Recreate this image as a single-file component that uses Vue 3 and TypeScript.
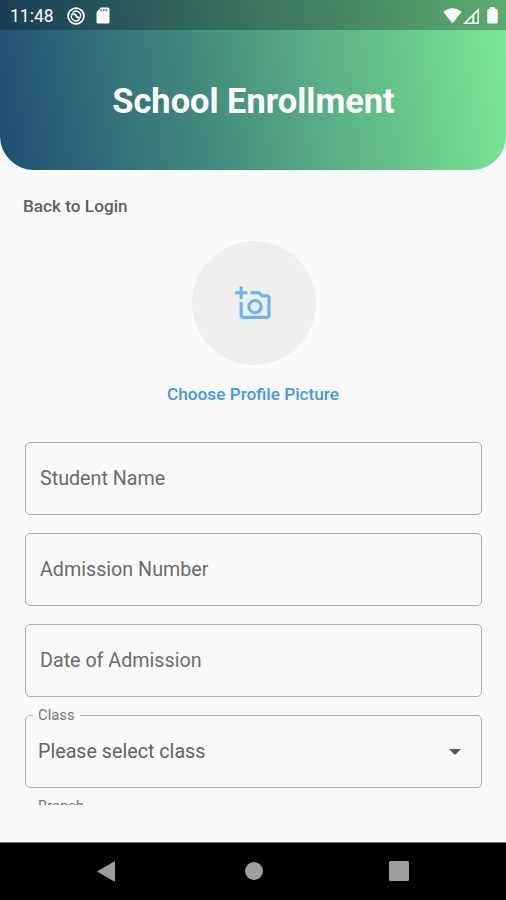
<script setup lang="ts">
interface TextField {
  id: string
  label: string
}

const fields: TextField[] = [
  { id: 'student', label: 'Student Name' },
  { id: 'admission', label: 'Admission Number' },
  { id: 'date', label: 'Date of Admission' },
]
</script>

<template>
  <div class="screen">
    <header class="header">
      <div class="status">
        <span class="clock">11:48</span>
        <svg class="sync" viewBox="0 0 18 18" width="18" height="18" fill="none" stroke="#fff">
          <circle cx="9" cy="9" r="7.9" stroke-width="1.7" />
          <path d="M5.5 5.6A4.7 4.7 0 0 1 13.6 9.6M12.6 12.2A4.7 4.7 0 0 1 4.4 8.4" stroke-width="1.4" />
          <path d="M4.2 7.8C7 6.2 8.4 7.4 9.3 9S11.400 11.400 13.8 10.200" stroke-width="1.8" />
        </svg>
        <svg class="card" viewBox="0 0 14 17" width="14" height="17">
          <path d="M5 .5H12Q13.5 .5 13.5 2V15Q13.5 16.5 12 16.5H2Q.5 16.5 .5 15V5Z" fill="#fff" />
          <path d="M5.3 2.300V4.300M7.900 2.300V4.300M10.500 2.300V4.300" stroke="#52736f" stroke-width="1.5" />
        </svg>
        <div class="system">
          <svg viewBox="0 0 19 16" width="19" height="16">
            <path d="M.3 3.7Q9.5-3 18.7 3.7L9.5 15.5Z" fill="#fff" />
          </svg>
          <svg class="signal" viewBox="0 0 17 16" width="17" height="16">
            <path d="M1.8 15.2L15.3 1.7V15.2Z" fill="none" stroke="#fff" stroke-width="1.5" />
            <path d="M10.300 6.500V15" fill="none" stroke="#fff" stroke-width="2" />
          </svg>
          <svg class="battery" viewBox="0 0 11 17" width="11" height="17">
            <path d="M3 .3H8V2H9.4Q10.7 2 10.7 3.3V15.3Q10.7 16.5 9.4 16.5H1.6Q.3 16.5 .3 15.3V3.3Q.3 2 1.6 2H3Z" fill="#fff" />
          </svg>
        </div>
      </div>
      <h1 class="title">School Enrollment</h1>
    </header>

    <main class="content">
      <a class="back">Back to Login</a>
      <div class="profile">
        <div class="avatar">
          <svg viewBox="0 0 24 24" width="37" height="37" fill="#64b5f6">
            <path d="M21 6h-3.17L16 4h-6v2h5.12l1.83 2H21v12H5v-9H3v9c0 1.1.9 2 2 2h16c1.1 0 2-.9 2-2V8c0-1.1-.9-2-2-2zM8 14c0 2.760 2.240 5 5 5s5-2.240 5-5-2.240-5-5-5-5 2.240-5 5zm5-3c1.650 0 3 1.350 3 3s-1.350 3-3 3-3-1.350-3-3 1.350-3 3-3zM5 6h3V4H5V1H3v3H0v2h3v3h2z" />
          </svg>
        </div>
        <a class="choose">Choose Profile Picture</a>
      </div>

      <form class="form">
        <div v-for="field in fields" :key="field.id" class="field">
          <span class="label">{{ field.label }}</span>
        </div>
        <div class="field select">
          <span class="legend">Class</span>
          <span class="value">Please select class</span>
          <svg viewBox="0 0 12 6" width="12" height="6"><path d="M0 0H12L6 6Z" fill="#555" /></svg>
        </div>
        <div class="field select">
          <span class="legend">Branch</span>
        </div>
      </form>
    </main>

    <nav class="navigation">
      <svg viewBox="0 0 18 21" width="18" height="21"><path d="M0 10.500L18 0V21Z" fill="#9e9e9e" /></svg>
      <svg class="home" viewBox="0 0 18 18" width="18" height="18"><circle cx="9" cy="9" r="9" fill="#9e9e9e" /></svg>
      <svg viewBox="0 0 20 20" width="20" height="20"><rect width="20" height="20" rx="1.5" fill="#9e9e9e" /></svg>
    </nav>
  </div>
</template>

<style>
body {
  margin: 0;
  background: #fafafa;
}
</style>

<style scoped>
.screen {
  width: 506px;
  height: 900px;
  display: flex;
  flex-direction: column;
  overflow: hidden;
  background: #fafafa;
  font-family: Roboto, sans-serif;
}
.header {
  height: 170px;
  flex: none;
  border-radius: 0 0 34px 34px;
  overflow: hidden;
  background: linear-gradient(82deg, #1f4e74, #4c9a80 50%, #7ce896);
}
.status {
  height: 30px;
  box-sizing: border-box;
  display: flex;
  align-items: center;
  padding: 1px 8px 0 10px;
  background: rgba(0, 0, 0, 0.26);
}
.clock {
  width: 57px;
  color: #fff;
  font-size: 17.5px;
  font-weight: 400;
  line-height: 28px;
}
.card {
  margin-left: 11px;
}
.system {
  margin-left: auto;
  display: flex;
  align-items: center;
}
.signal {
  margin-left: 1px;
}
.battery {
  margin-left: 7px;
}
.title {
  margin: 51px 0 0 1px;
  color: #fff;
  font-size: 34.4px;
  font-weight: 700;
  line-height: 41px;
  text-align: center;
}
.content {
  height: 635px;
  flex: none;
  overflow: hidden;
}
.back {
  display: block;
  margin: 26px 0 0 23px;
  color: #606060;
  font-size: 17.2px;
  font-weight: 500;
  line-height: 20px;
}
.profile {
  display: flex;
  flex-direction: column;
  align-items: center;
  margin: 25px 0 0 1px;
}
.avatar {
  width: 124px;
  height: 124px;
  display: flex;
  align-items: center;
  justify-content: center;
  border-radius: 50%;
  background: #eee;
}
.choose {
  margin-top: 19px;
  margin-right: 1px;
  color: #3e98f2;
  font-size: 17.2px;
  font-weight: 500;
  line-height: 20px;
}
.form {
  display: flex;
  flex-direction: column;
  gap: 18px;
  margin: 38px 24px 0 25px;
}
.field {
  height: 73px;
  flex: none;
  box-sizing: border-box;
  display: flex;
  align-items: center;
  padding: 0 14px;
  border: 1.5px solid #acacac;
  border-radius: 5px;
  color: #6c6c6c;
  font-size: 19.7px;
  line-height: 24px;
}
.select {
  position: relative;
  padding: 0 20px 0 12px;
  color: #636363;
}
.legend {
  position: absolute;
  top: -10px;
  left: 7px;
  padding: 0 5px;
  background: #fafafa;
  color: #777;
  font-size: 14.8px;
  line-height: 18px;
}
.select svg {
  margin-left: auto;
}
.navigation {
  height: 58px;
  flex: none;
  box-sizing: border-box;
  display: flex;
  justify-content: space-between;
  align-items: center;
  margin-top: auto;
  padding: 0 97px 1px;
  border-top: 1px solid #777;
  background: #000;
}
.home {
  margin-left: 3px;
}
</style>
